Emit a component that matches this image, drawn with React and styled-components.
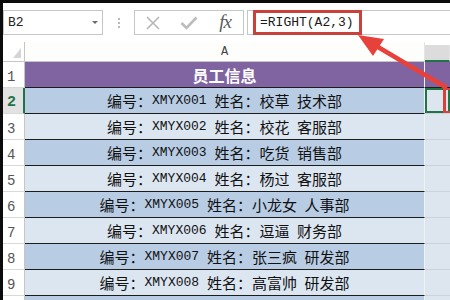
import React from 'react';
import styled, { createGlobalStyle } from 'styled-components';

const GlobalStyle = createGlobalStyle`
  html, body {
    margin: 0;
    padding: 0;
    background: #fff;
    overflow: hidden;
  }
`;

const Frame = styled.div`
  position: relative;
  width: 450px;
  height: 300px;
  box-sizing: border-box;
  border-top: 3px solid #0b0b0b;
  border-left: 3px solid #0b0b0b;
  background: #fff;
  overflow: hidden;
  font-family: "Noto Sans CJK SC", sans-serif;
`;

/* formula bar */
const FormulaBar = styled.div`
  display: flex;
  align-items: stretch;
  height: 25px;
  margin-top: 7px;
`;

const NameBox = styled.div`
  display: flex;
  align-items: center;
  justify-content: space-between;
  width: 100px;
  box-sizing: border-box;
  border: 1px solid #c6c6c6;
  padding: 0 4px 0 4px;
  font: 13px "Liberation Mono", monospace;
  color: #222;
`;

const Caret = styled.span`
  width: 0;
  height: 0;
  border-left: 3px solid transparent;
  border-right: 3px solid transparent;
  border-top: 3px solid #6b6b6b;
`;

const Grip = styled.div`
  width: 31px;
  display: flex;
  flex-direction: column;
  align-items: center;
  justify-content: center;
  gap: 2px;
`;

const Dot = styled.span`
  width: 2px;
  height: 2px;
  background: #b9b9b9;
`;

const ButtonGroup = styled.div`
  width: 110px;
  box-sizing: border-box;
  border: 1px solid #c6c6c6;
  display: grid;
  grid-template-columns: repeat(3, 36px);
  align-items: center;
  justify-items: center;
`;

const Fx = styled.span`
  font: italic 19px "Liberation Serif", serif;
  color: #5a5a5a;
  line-height: 1;
  margin-top: -2px;
  letter-spacing: -1px;
`;

const FormulaInput = styled.div`
  flex: 1;
  margin-left: 3px;
  border: 1px solid #c6c6c6;
  border-right: none;
  padding-left: 5px;
  display: flex;
`;

const Highlight = styled.div`
  margin: -1px 0;
  box-sizing: border-box;
  width: 109px;
  border: 3px solid #c9413a;
  display: flex;
  align-items: center;
  padding-left: 4px;
  font: 13px "Liberation Mono", monospace;
  color: #1a1a1a;
`;

/* sheet */
const Sheet = styled.div`
  margin-top: 7px;
`;

const Row = styled.div`
  display: grid;
  grid-template-columns: 22px 400px 25px;
  height: ${p => (p.$head ? 20 : 26)}px;
`;

const Corner = styled.div`
  border-right: 1px solid #c6c6c6;
  border-bottom: 1px solid #c6c6c6;
  display: flex;
  align-items: flex-end;
  justify-content: flex-end;
  padding: 0 3px 3px 0;
`;

const ColHead = styled.div`
  display: flex;
  align-items: center;
  justify-content: center;
  font: 12px "Liberation Mono", monospace;
  color: #444;
  background: ${p => (p.$active ? '#dcdcdc' : '#fdfdfb')};
  border-bottom: ${p => (p.$active ? '2px solid #217346' : '1px solid #c6c6c6')};
  border-right: 1px solid #e4e4e4;
  margin-top: ${p => (p.$active ? '3px' : '0')};
`;

const RowHead = styled.div`
  display: flex;
  align-items: flex-end;
  padding: 0 0 2px 4px;
  box-sizing: border-box;
  font: ${p => (p.$active ? 'bold 15px' : '14px')} "Liberation Mono", monospace;
  color: ${p => (p.$active ? '#217346' : '#555')};
  background: ${p => (p.$active ? '#e2e2e2' : '#fff')};
  border-bottom: 1px solid #d9d9d9;
  border-right: ${p => (p.$active ? '2px solid #217346' : '1px solid #c6c6c6')};
`;

const fills = {
  title: '#8064a2',
  dark: '#b8cce4',
  light: '#dce6f1',
};

const Cell = styled.div`
  display: flex;
  align-items: center;
  justify-content: center;
  background: ${p => fills[p.$tone]};
  border-bottom: 1px solid #1c1c1c;
  border-right: 1px solid #eef1f5;
  font-size: ${p => (p.$tone === 'title' ? 16 : 15)}px;
  font-weight: ${p => (p.$tone === 'title' ? 'bold' : 'normal')};
  color: ${p => (p.$tone === 'title' ? '#fff' : '#111')};
  white-space: pre;
`;

const Id = styled.span`
  font: 13px "Liberation Mono", monospace;
`;

const SideCell = styled.div`
  display: flex;
  background: ${p => (p.$tone === 'title' ? fills.title : '#dde5ee')};
  border-bottom: 1px solid ${p => (p.$tone === 'title' ? '#1c1c1c' : '#c9d3de')};
  box-shadow: ${p => (p.$active ? 'inset 0 0 0 2px #217346' : 'none')};
  padding-left: 18px;
  overflow: hidden;
`;

const Mark = styled.div`
  flex-shrink: 0;
  margin: -1px 0;
  width: 12px;
  border: 3px solid #d8403a;
`;

const Arrow = styled.svg`
  position: absolute;
  left: -3px;
  top: -3px;
  pointer-events: none;
`;

const people = [
  ['XMYX001', '校草', '技术部'],
  ['XMYX002', '校花', '客服部'],
  ['XMYX003', '吃货', '销售部'],
  ['XMYX004', '杨过', '客服部'],
  ['XMYX005', '小龙女', '人事部'],
  ['XMYX006', '逗逼', '财务部'],
  ['XMYX007', '张三疯', '研发部'],
  ['XMYX008', '高富帅', '研发部'],
];

const App = () => (
  <Frame>
    <GlobalStyle />
    <FormulaBar>
      <NameBox>
        B2
        <Caret />
      </NameBox>
      <Grip>
        <Dot />
        <Dot />
        <Dot />
      </Grip>
      <ButtonGroup>
        <svg width="16" height="16" viewBox="0 0 16 16">
          <path d="M2 2 L14 14 M14 2 L2 14" stroke="#b7b7b7" strokeWidth="1.6" fill="none" />
        </svg>
        <svg width="18" height="14" viewBox="0 0 18 14">
          <path d="M1.5 7 L6.5 12 L16.5 1.5" stroke="#bcbcbc" strokeWidth="2.6" fill="none" />
        </svg>
        <Fx>fx</Fx>
      </ButtonGroup>
      <FormulaInput>
        <Highlight>=RIGHT(A2,3)</Highlight>
      </FormulaInput>
    </FormulaBar>

    <Sheet>
      <Row $head>
        <Corner>
          <svg width="8" height="10" viewBox="0 0 8 10">
            <polygon points="8,0 8,10 0,10" fill="#d5d5d5" />
          </svg>
        </Corner>
        <ColHead>A</ColHead>
        <ColHead $active />
      </Row>
      <Row>
        <RowHead>1</RowHead>
        <Cell $tone="title">员工信息</Cell>
        <SideCell $tone="title" />
      </Row>
      {people.map(([id, name, dept], i) => (
        <Row key={id}>
          <RowHead $active={i === 0}>{i + 2}</RowHead>
          <Cell $tone={i % 2 === 0 ? 'dark' : 'light'}>
            编号：<Id>{id} </Id>姓名：{name}{'\u2002'}{dept}
          </Cell>
          <SideCell $active={i === 0}>{i === 0 && <Mark />}</SideCell>
        </Row>
      ))}
      <Row>
        <RowHead />
        <Cell $tone="dark" />
        <SideCell />
      </Row>
    </Sheet>

    <Arrow width="450" height="300" viewBox="0 0 450 300">
      <line x1="378" y1="47" x2="447" y2="88" stroke="#e8403a" strokeWidth="4.5" />
      <polygon points="358,35 384,39 373,56" fill="#e8403a" />
    </Arrow>
  </Frame>
);

export default App;
